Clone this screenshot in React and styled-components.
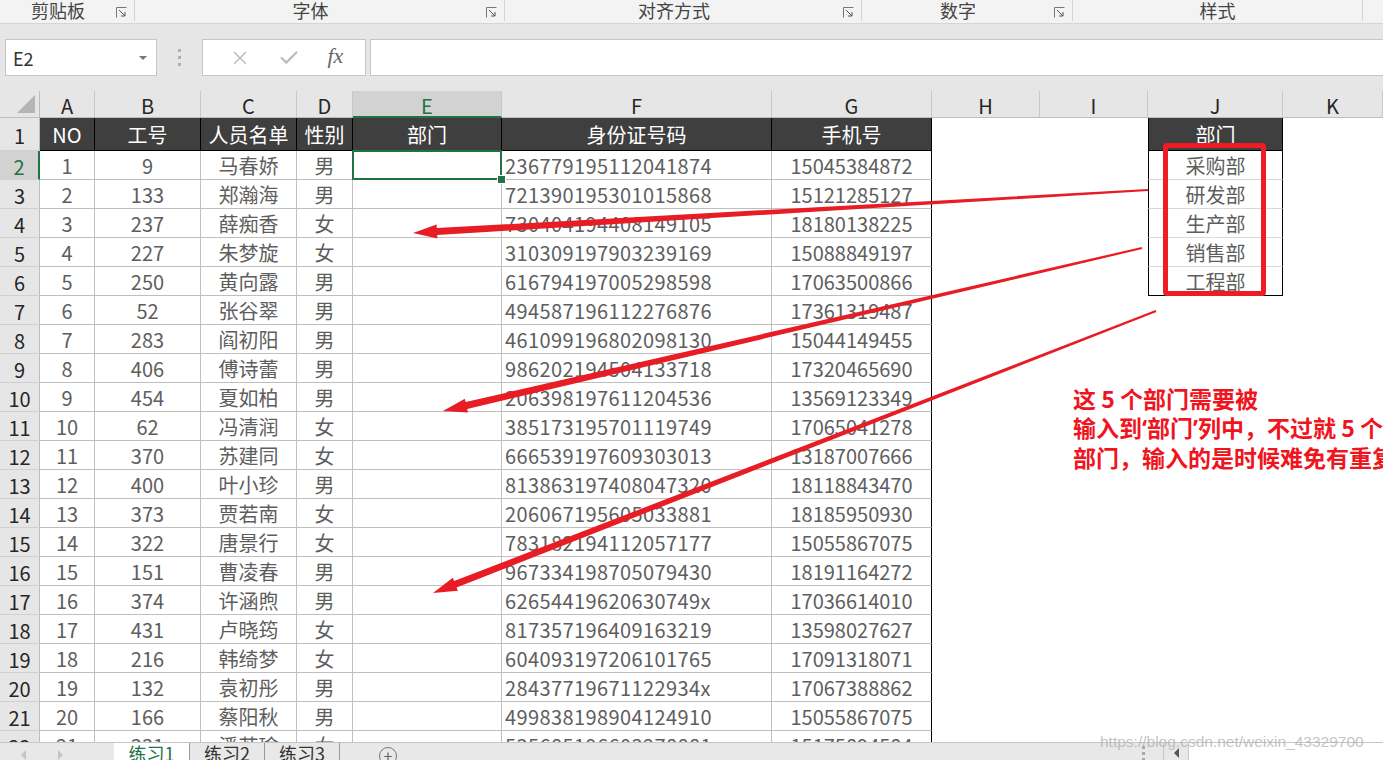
import React from "react";
import styled, { createGlobalStyle } from "styled-components";
import { X, Check } from "lucide-react";

const GlobalStyle = createGlobalStyle`
  html, body { margin: 0; padding: 0; }
  body {
    font-family: "Noto Sans CJK SC", "Noto Sans", sans-serif;
    background: #fff;
    overflow: hidden;
  }
`;

const GREEN = "#217346";
const RED = "#e81c24";

const Page = styled.div`
  position: relative;
  width: 1383px;
  height: 760px;
  overflow: hidden;
  display: flex;
  flex-direction: column;
`;

/* ribbon group labels */
const RibbonBar = styled.div`
  height: 24px;
  display: flex;
  align-items: flex-start;
  background: #f3f3f3;
  border-bottom: 1px solid #d5d5d5;
  box-sizing: border-box;
`;

const Group = styled.div`
  width: ${(p) => p.$w}px;
  height: 21px;
  display: flex;
  align-items: center;
  border-right: 1px solid #d4d4d4;
  box-sizing: border-box;
  flex-shrink: 0;
`;

const GroupLabel = styled.div`
  flex: 1;
  text-align: center;
  font-size: 18px;
  color: #444;
  line-height: 21px;
`;

const Launcher = styled.svg`
  width: 11px;
  height: 11px;
  margin-right: 7px;
  margin-top: 4px;
`;

/* formula bar */
const FormulaArea = styled.div`
  height: 67px;
  background: #e6e6e6;
  padding-top: 15px;
  box-sizing: border-box;
  display: flex;
  align-items: flex-start;
`;

const NameBox = styled.div`
  margin-left: 5px;
  width: 152px;
  height: 37px;
  background: #fff;
  border: 1px solid #c6c6c6;
  box-sizing: border-box;
  display: flex;
  align-items: center;
  justify-content: space-between;
  padding: 0 9px 0 7px;
  font-size: 18px;
  color: #333;
`;

const Caret = styled.span`
  width: 0;
  height: 0;
  border-left: 4px solid transparent;
  border-right: 4px solid transparent;
  border-top: 4px solid #777;
`;

const Dots = styled.div`
  width: 45px;
  height: 37px;
  display: flex;
  flex-direction: column;
  align-items: center;
  justify-content: center;
  gap: 4px;
  span {
    width: 3px;
    height: 3px;
    background: #b0b0b0;
  }
`;

const FuncBox = styled.div`
  width: 164px;
  height: 37px;
  background: #fff;
  border: 1px solid #c6c6c6;
  box-sizing: border-box;
  display: flex;
  align-items: center;
  justify-content: space-around;
  padding: 0 8px 0 12px;
  color: #bdbdbd;
`;

const Fx = styled.span`
  font-family: "Liberation Serif", "DejaVu Serif", serif;
  font-style: italic;
  font-size: 22px;
  color: #666;
  margin-top: -3px;
`;

const FormulaInput = styled.div`
  flex: 1;
  margin-left: 4px;
  height: 37px;
  background: #fff;
  border: 1px solid #c6c6c6;
  border-right: none;
  box-sizing: border-box;
`;

/* sheet */
const Sheet = styled.div`
  display: grid;
  grid-template-columns: 40px 55px 106px 96px 56px 149px 270px 160px 108px 108px 135px 1fr;
  grid-template-rows: 27px 33px;
  grid-auto-rows: 29px;
  height: 651px;
  overflow: hidden;
  background: #fff;
  font-size: 20px;
`;

const CellBase = styled.div`
  box-sizing: border-box;
  display: flex;
  align-items: center;
  white-space: nowrap;
  overflow: hidden;
`;

const Corner = styled(CellBase)`
  background: #e6e6e6;
  border-right: 1px solid #bdbdbd;
  border-bottom: 1px solid #bdbdbd;
  justify-content: flex-end;
  align-items: flex-end;
  padding: 0 4px 4px 0;
`;

const CornerTri = styled.span`
  width: 0;
  height: 0;
  border-left: 18px solid transparent;
  border-bottom: 18px solid #b5b5b5;
`;

const ColHead = styled(CellBase)`
  justify-content: center;
  background: ${(p) => (p.$active ? "#d2d2d2" : "#e6e6e6")};
  color: ${(p) => (p.$active ? GREEN : "#262626")};
  border-right: 1px solid #c8c8c8;
  border-bottom: ${(p) => (p.$active ? `2px solid ${GREEN}` : "1px solid #bdbdbd")};
  padding-top: ${(p) => (p.$active ? "3px" : "2px")};
`;

const RowHead = styled(CellBase)`
  justify-content: center;
  background: ${(p) => (p.$active ? "#d2d2d2" : "#e6e6e6")};
  color: ${(p) => (p.$active ? GREEN : "#262626")};
  border-right: ${(p) => (p.$active ? `2px solid ${GREEN}` : "1px solid #bdbdbd")};
  border-bottom: 1px solid #d0d0d0;
  padding-top: 3px;
`;

const HeadCell = styled(CellBase)`
  justify-content: center;
  background: #3f3f3f;
  color: #fff;
  border-right: 1px solid #000;
  border-bottom: 1px solid #000;
  border-left: ${(p) => (p.$boxed ? "1px solid #000" : "none")};
  padding-top: 1px;
`;

const DataCell = styled(CellBase)`
  position: ${(p) => (p.$selected ? "relative" : "static")};
  overflow: ${(p) => (p.$selected ? "visible" : "hidden")};
  justify-content: ${(p) => (p.$align === "left" ? "flex-start" : "center")};
  padding-left: ${(p) => (p.$align === "left" ? "3px" : "0")};
  letter-spacing: ${(p) => (p.$align === "left" ? "0.4px" : "0")};
  color: #5e5e5e;
  border-right: 1px solid ${(p) => (p.$edge ? "#000" : "#bfbfbf")};
  border-bottom: 1px solid #bfbfbf;

  ${(p) =>
    p.$selected &&
    `
    z-index: 2;
    &::before {
      content: "";
      position: absolute;
      left: -1px; top: -1px; right: -1px; bottom: -1px;
      border: 2px solid ${GREEN};
    }
    &::after {
      content: "";
      position: absolute;
      right: -5px; bottom: -5px;
      width: 7px; height: 7px;
      background: ${GREEN};
      border: 1px solid #fff;
    }
  `}
`;

const Blank = styled(CellBase)`
  background: #fff;
`;

const DeptCell = styled(CellBase)`
  justify-content: center;
  color: #5e5e5e;
  border-left: 1px solid #000;
  border-right: 1px solid #000;
  border-bottom: 1px solid ${(p) => (p.$last ? "#000" : "#d9d9d9")};
`;

/* overlays */
const Overlay = styled.svg`
  position: absolute;
  left: 0;
  top: 0;
  pointer-events: none;
  z-index: 5;
`;

const RedBox = styled.div`
  position: absolute;
  left: 1163px;
  top: 143px;
  width: 103px;
  height: 153px;
  border: 5px solid #ee1c25;
  border-radius: 4px;
  box-sizing: border-box;
  z-index: 5;
`;

const Note = styled.div`
  position: absolute;
  left: 1073px;
  top: 384px;
  font-size: 23px;
  font-weight: 700;
  line-height: 29px;
  color: #f0141e;
  white-space: nowrap;
  z-index: 5;
`;

const Quote = styled.span`
  font-family: "Noto Sans", "DejaVu Sans", sans-serif;
`;

const Watermark = styled.div`
  position: absolute;
  left: 1100px;
  top: 733px;
  font-family: "Liberation Sans", Arial, sans-serif;
  font-size: 15.5px;
  color: rgba(175, 175, 175, 0.75);
  z-index: 6;
`;

/* sheet tabs */
const TabBar = styled.div`
  height: 18px;
  display: flex;
  align-items: flex-start;
  background: #e8e8e8;
  border-top: 1px solid #c6c6c6;
  box-sizing: border-box;
  overflow: hidden;
`;

const TabNav = styled.div`
  width: 114px;
  display: flex;
  gap: 32px;
  padding: 7px 0 0 21px;
  box-sizing: border-box;
  span {
    width: 0;
    height: 0;
    border-top: 5px solid transparent;
    border-bottom: 5px solid transparent;
  }
  span:first-child { border-right: 5px solid #c4c4c4; }
  span:last-child { border-left: 5px solid #c4c4c4; }
`;

const Tab = styled.div`
  width: ${(p) => (p.$active ? 76 : 75)}px;
  height: 22px;
  line-height: 22px;
  margin-top: -1px;
  font-size: 18px;
  text-align: center;
  box-sizing: border-box;
  color: ${(p) => (p.$active ? GREEN : "#333")};
  background: ${(p) => (p.$active ? "#fff" : "transparent")};
  border-right: 1px solid #9a9a9a;
`;

const AddSheet = styled.div`
  margin: 4px 0 0 39px;
  width: 18px;
  height: 18px;
  border: 1px solid #777;
  border-radius: 50%;
  box-sizing: border-box;
  display: flex;
  justify-content: center;
  font-size: 16px;
  line-height: 14px;
  color: #666;
`;

const Spacer = styled.div`
  flex: 1;
`;

const SplitDots = styled.div`
  display: flex;
  flex-direction: column;
  gap: 3px;
  padding-top: 3px;
  margin-right: 18px;
  span {
    width: 3px;
    height: 3px;
    background: #a8a8a8;
  }
`;

const ScrollTrack = styled.div`
  width: 219px;
  height: 18px;
  display: flex;
  background: #fff;
  border-left: 1px solid #c6c6c6;
`;

const ScrollBtn = styled.div`
  width: 25px;
  height: 18px;
  background: #e8e8e8;
  border-right: 1px solid #c6c6c6;
  display: flex;
  justify-content: center;
  padding-top: 5px;
  box-sizing: border-box;
  span {
    width: 0;
    height: 0;
    border-top: 5px solid transparent;
    border-bottom: 5px solid transparent;
    border-right: 5px solid #555;
  }
`;

/* data */
const cols = ["A", "B", "C", "D", "E", "F", "G", "H", "I", "J", "K"];
const heads = ["NO", "工号", "人员名单", "性别", "部门", "身份证号码", "手机号"];
const depts = ["采购部", "研发部", "生产部", "销售部", "工程部"];

const rows = [
  [1, 9, "马春娇", "男", "236779195112041874", "15045384872"],
  [2, 133, "郑瀚海", "男", "721390195301015868", "15121285127"],
  [3, 237, "薛痴香", "女", "730404194408149105", "18180138225"],
  [4, 227, "朱梦旋", "女", "310309197903239169", "15088849197"],
  [5, 250, "黄向露", "男", "616794197005298598", "17063500866"],
  [6, 52, "张谷翠", "男", "494587196112276876", "17361319487"],
  [7, 283, "阎初阳", "男", "461099196802098130", "15044149455"],
  [8, 406, "傅诗蕾", "男", "986202194504133718", "17320465690"],
  [9, 454, "夏如柏", "男", "206398197611204536", "13569123349"],
  [10, 62, "冯清润", "女", "385173195701119749", "17065041278"],
  [11, 370, "苏建同", "女", "666539197609303013", "13187007666"],
  [12, 400, "叶小珍", "男", "813863197408047320", "18118843470"],
  [13, 373, "贾若南", "女", "206067195605033881", "18185950930"],
  [14, 322, "唐景行", "女", "783182194112057177", "15055867075"],
  [15, 151, "曹凌春", "男", "967334198705079430", "18191164272"],
  [16, 374, "许涵煦", "男", "62654419620630749x", "17036614010"],
  [17, 431, "卢晓筠", "女", "817357196409163219", "13598027627"],
  [18, 216, "韩绮梦", "女", "604093197206101765", "17091318071"],
  [19, 132, "袁初彤", "男", "28437719671122934x", "17067388862"],
  [20, 166, "蔡阳秋", "男", "499838198904124910", "15055867075"],
  [21, 331, "潘若瑜", "女", "535685196603278881", "15175894584"],
];

function arrowPoints(x1, y1, x2, y2, wTail = 2, wBase = 7, headLen = 24, headW = 7) {
  const dx = x2 - x1;
  const dy = y2 - y1;
  const len = Math.hypot(dx, dy);
  const ux = dx / len;
  const uy = dy / len;
  const nx = -uy;
  const ny = ux;
  const bx = x2 - ux * headLen;
  const by = y2 - uy * headLen;
  const pts = [
    [x1 + (nx * wTail) / 2, y1 + (ny * wTail) / 2],
    [bx + (nx * wBase) / 2, by + (ny * wBase) / 2],
    [bx + nx * headW, by + ny * headW],
    [x2, y2],
    [bx - nx * headW, by - ny * headW],
    [bx - (nx * wBase) / 2, by - (ny * wBase) / 2],
    [x1 - (nx * wTail) / 2, y1 - (ny * wTail) / 2],
  ];
  return pts.map((p) => p.map((v) => v.toFixed(1)).join(",")).join(" ");
}

const arrows = [
  [1148, 190, 413, 233],
  [1142, 248, 443, 411],
  [1156, 311, 433, 593],
];

function LauncherIcon() {
  return (
    <Launcher viewBox="0 0 11 11">
      <path d="M0.5 10.5V0.5H10.5" fill="none" stroke="#777" strokeWidth="1" />
      <path d="M3 3L9 9M9 5V9H5" fill="none" stroke="#555" strokeWidth="1" />
    </Launcher>
  );
}

function SheetGrid() {
  const cells = [];
  cells.push(
    <Corner key="corner">
      <CornerTri />
    </Corner>
  );
  cols.forEach((c) =>
    cells.push(
      <ColHead key={"h" + c} $active={c === "E"}>
        {c}
      </ColHead>
    )
  );

  // row 1
  cells.push(<RowHead key="r1">1</RowHead>);
  heads.forEach((h, i) => cells.push(<HeadCell key={"t" + i}>{h}</HeadCell>));
  cells.push(<Blank key="h1" />, <Blank key="i1" />);
  cells.push(
    <HeadCell key="j1" $boxed>
      部门
    </HeadCell>
  );
  cells.push(<Blank key="k1" />);

  rows.forEach((r, idx) => {
    const n = idx + 2;
    cells.push(
      <RowHead key={"r" + n} $active={n === 2}>
        {n}
      </RowHead>
    );
    cells.push(<DataCell key={n + "a"}>{r[0]}</DataCell>);
    cells.push(<DataCell key={n + "b"}>{r[1]}</DataCell>);
    cells.push(<DataCell key={n + "c"}>{r[2]}</DataCell>);
    cells.push(<DataCell key={n + "d"}>{r[3]}</DataCell>);
    cells.push(<DataCell key={n + "e"} $selected={n === 2} />);
    cells.push(
      <DataCell key={n + "f"} $align="left">
        {r[4]}
      </DataCell>
    );
    cells.push(
      <DataCell key={n + "g"} $edge>
        {r[5]}
      </DataCell>
    );
    cells.push(<Blank key={n + "h"} />, <Blank key={n + "i"} />);
    if (idx < depts.length) {
      cells.push(
        <DeptCell key={n + "j"} $last={idx === depts.length - 1}>
          {depts[idx]}
        </DeptCell>
      );
    } else {
      cells.push(<Blank key={n + "j"} />);
    }
    cells.push(<Blank key={n + "k"} />);
  });

  return <Sheet>{cells}</Sheet>;
}

export default function App() {
  return (
    <Page>
      <GlobalStyle />
      <RibbonBar>
        <Group $w={135}>
          <GroupLabel>剪贴板</GroupLabel>
          <LauncherIcon />
        </Group>
        <Group $w={370}>
          <GroupLabel>字体</GroupLabel>
          <LauncherIcon />
        </Group>
        <Group $w={357}>
          <GroupLabel>对齐方式</GroupLabel>
          <LauncherIcon />
        </Group>
        <Group $w={211}>
          <GroupLabel>数字</GroupLabel>
          <LauncherIcon />
        </Group>
        <Group $w={290}>
          <GroupLabel>样式</GroupLabel>
        </Group>
      </RibbonBar>

      <FormulaArea>
        <NameBox>
          E2
          <Caret />
        </NameBox>
        <Dots>
          <span />
          <span />
          <span />
        </Dots>
        <FuncBox>
          <X size={22} strokeWidth={1.6} />
          <Check size={22} strokeWidth={2.6} />
          <Fx>fx</Fx>
        </FuncBox>
        <FormulaInput />
      </FormulaArea>

      <SheetGrid />

      <TabBar>
        <TabNav>
          <span />
          <span />
        </TabNav>
        <Tab $active>练习1</Tab>
        <Tab>练习2</Tab>
        <Tab>练习3</Tab>
        <AddSheet>+</AddSheet>
        <Spacer />
        <SplitDots>
          <span />
          <span />
          <span />
        </SplitDots>
        <ScrollTrack>
          <ScrollBtn>
            <span />
          </ScrollBtn>
        </ScrollTrack>
      </TabBar>

      <RedBox />
      <Overlay width="1383" height="760" viewBox="0 0 1383 760">
        {arrows.map((a, i) => (
          <polygon key={i} points={arrowPoints(...a)} fill={RED} />
        ))}
      </Overlay>
      <Note>
        <div>这 5 个部门需要被</div>
        <div>
          输入到<Quote>‘</Quote>部门<Quote>’</Quote>列中，不过就 5 个
        </div>
        <div>部门，输入的是时候难免有重复</div>
      </Note>
      <Watermark>https://blog.csdn.net/weixin_43329700</Watermark>
    </Page>
  );
}
